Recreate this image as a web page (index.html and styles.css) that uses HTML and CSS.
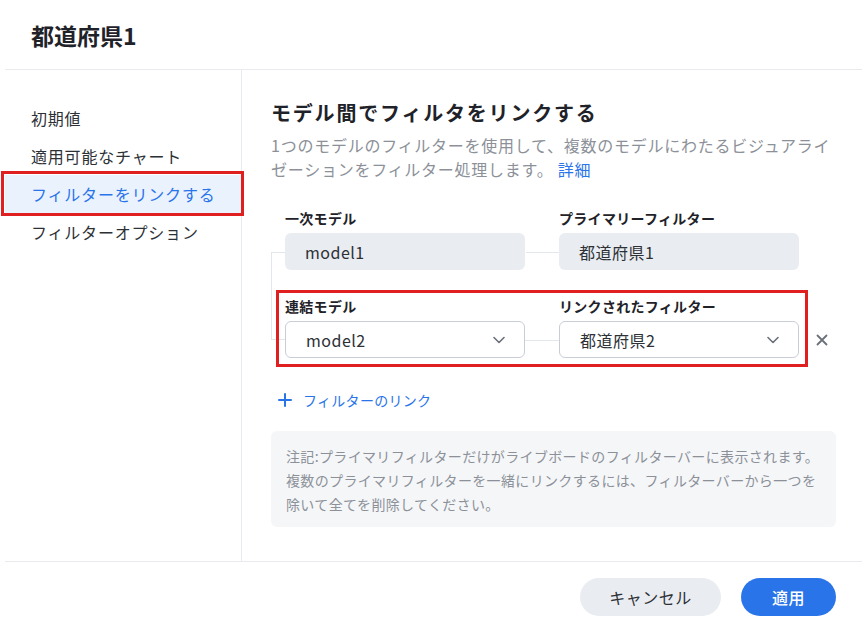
FILE: index.html
```html
<!DOCTYPE html>
<html lang="ja">
<head>
    <meta charset="UTF-8" />
    <meta name="viewport" content="width=device-width, initial-scale=1.0"/>
    <title>都道府県1</title>
    <link rel="stylesheet" href="styles.css">
</head>
<body>

<div class="dialog">
    <header class="dialog-header">
        <h1>都道府県1</h1>
    </header>

    <div class="dialog-body">
        <nav class="sidebar">
            <div class="nav-item">初期値</div>
            <div class="nav-item">適用可能なチャート</div>
            <div class="nav-item selected">フィルターをリンクする</div>
            <div class="nav-item">フィルターオプション</div>
        </nav>

        <main class="content">
            <h2>モデル間でフィルタをリンクする</h2>
            <p class="desc">1つのモデルのフィルターを使用して、複数のモデルにわたるビジュアライ<br>ゼーションをフィルター処理します。 <a href="#">詳細</a></p>

            <div class="links">
                <div class="link-row">
                    <div class="field">
                        <label>一次モデル</label>
                        <div class="box readonly">model1</div>
                    </div>
                    <div class="field">
                        <label>プライマリーフィルター</label>
                        <div class="box readonly">都道府県1</div>
                    </div>
                </div>

                <div class="link-row marked">
                    <div class="field">
                        <label>連結モデル</label>
                        <div class="box select">
                            <span>model2</span>
                            <svg width="12" height="8" viewBox="0 0 12 8"><polyline points="1,1.5 6,6.5 11,1.5" fill="none" stroke="#6b7079" stroke-width="1.6" stroke-linecap="round" stroke-linejoin="round"/></svg>
                        </div>
                    </div>
                    <div class="field">
                        <label>リンクされたフィルター</label>
                        <div class="box select">
                            <span>都道府県2</span>
                            <svg width="12" height="8" viewBox="0 0 12 8"><polyline points="1,1.5 6,6.5 11,1.5" fill="none" stroke="#6b7079" stroke-width="1.6" stroke-linecap="round" stroke-linejoin="round"/></svg>
                        </div>
                    </div>
                    <button class="remove" aria-label="削除">
                        <svg width="12" height="12" viewBox="0 0 12 12"><path d="M1.5 1.5L10.5 10.5M10.5 1.5L1.5 10.5" stroke="#6b7079" stroke-width="1.8" stroke-linecap="round"/></svg>
                    </button>
                </div>
            </div>

            <a href="#" class="add-link">
                <svg width="14" height="14" viewBox="0 0 14 14"><path d="M7 1V13M1 7H13" stroke="#2a74ea" stroke-width="2" stroke-linecap="round"/></svg>
                フィルターのリンク
            </a>

            <div class="note">
                注記:プライマリフィルターだけがライブボードのフィルターバーに表示されます。<br>
                複数のプライマリフィルターを一緒にリンクするには、フィルターバーから一つを<br>
                除いて全てを削除してください。
            </div>
        </main>
    </div>

    <footer class="dialog-footer">
        <button class="btn btn-cancel">キャンセル</button>
        <button class="btn btn-apply">適用</button>
    </footer>
</div>

</body>
</html>
```

FILE: styles.css
```css
body {
    margin: 0;
    font-family: "Noto Sans CJK JP", "Noto Sans", sans-serif;
    background: #fff;
    color: #2d3136;
}

/* Header */
.dialog-header {
    margin-left: 5px;
    padding: 20px 26px 19px;
    border-bottom: 1px solid #e8eaed;
}
.dialog-header h1 {
    margin: 0;
    font-size: 23px;
    line-height: 30px;
    font-weight: 700;
    color: #1f2329;
}

/* Body */
.dialog-body {
    display: flex;
    height: 491px;
}

.sidebar {
    margin-left: 5px;
    width: 236px;
    padding-top: 29px;
    border-right: 1px solid #e8eaed;
}
.nav-item {
    position: relative;
    height: 38px;
    line-height: 38px;
    padding-left: 26px;
    font-size: 16px;
    letter-spacing: 0.8px;
    color: #2d3136;
}
.nav-item.selected {
    background: #eaf2fe;
    color: #2a74ea;
}
.nav-item.selected::after {
    content: "";
    position: absolute;
    top: -4px;
    left: -4px;
    right: -3px;
    bottom: -3px;
    border: 3px solid #e02020;
}

.content {
    flex: 1;
    padding: 28px 26px 0 29px;
}
.content h2 {
    margin: 0;
    font-size: 20px;
    line-height: 30px;
    font-weight: 700;
    letter-spacing: 1.8px;
    color: #1f2329;
}
.desc {
    margin: 5px 0 0;
    font-size: 16px;
    line-height: 24px;
    letter-spacing: 0.75px;
    color: #8c9199;
}
.desc a {
    color: #2a74ea;
    text-decoration: none;
}

/* Linked filters */
.links {
    position: relative;
    margin-top: 27px;
}
.links::before {
    content: "";
    position: absolute;
    left: 0;
    top: 44px;
    width: 14px;
    height: 88px;
    box-sizing: border-box;
    border: 1px solid #e3e6ea;
    border-right: none;
}

.link-row {
    position: relative;
    display: flex;
    gap: 34px;
    padding-left: 14px;
}
.link-row + .link-row {
    margin-top: 26px;
}
.link-row.marked::after {
    content: "";
    position: absolute;
    top: -6px;
    left: 5px;
    width: 526px;
    bottom: -9px;
    border: 3px solid #e02020;
    pointer-events: none;
}

.field {
    width: 240px;
}
.field label {
    display: block;
    font-size: 14px;
    line-height: 20px;
    font-weight: 700;
    letter-spacing: 0.3px;
    color: #1f2329;
    margin-bottom: 5px;
}
.box {
    position: relative;
    box-sizing: border-box;
    height: 37px;
    display: flex;
    align-items: center;
    justify-content: space-between;
    padding: 0 20px;
    border-radius: 6px;
    font-size: 16px;
    letter-spacing: 0.5px;
    color: #2d3136;
}
.box.readonly {
    background: #e9ecf0;
}
.box.select {
    background: #fff;
    border: 1px solid #c9ced6;
    padding-right: 19px;
}
.field:first-child .box::after {
    content: "";
    position: absolute;
    right: -35px;
    top: 50%;
    width: 34px;
    border-top: 1px solid #e3e6ea;
}

.remove {
    align-self: flex-end;
    height: 37px;
    width: 24px;
    margin-left: -23px;
    padding: 0;
    border: none;
    background: none;
    display: flex;
    align-items: center;
    justify-content: center;
}

.add-link {
    display: inline-flex;
    align-items: center;
    gap: 11px;
    margin: 32px 0 0 7px;
    font-size: 14px;
    line-height: 20px;
    letter-spacing: 0.3px;
    color: #2a74ea;
    text-decoration: none;
}

.note {
    margin-top: 19px;
    padding: 13px 4px 11px 15px;
    background: #f5f6f8;
    border-radius: 6px;
    font-size: 14px;
    line-height: 24px;
    letter-spacing: 0.35px;
    color: #8c9199;
}

/* Footer */
.dialog-footer {
    margin-left: 5px;
    border-top: 1px solid #e8eaed;
    display: flex;
    justify-content: flex-end;
    gap: 20px;
    padding: 16px 26px 0 0;
}
.btn {
    height: 38px;
    border: none;
    border-radius: 19px;
    font-family: inherit;
    font-size: 16px;
    letter-spacing: 0.5px;
    cursor: pointer;
}
.btn-cancel {
    width: 141px;
    background: #e9ecf0;
    color: #2d3136;
}
.btn-apply {
    width: 95px;
    background: #2a74ea;
    color: #fff;
    font-weight: 500;
}
```
